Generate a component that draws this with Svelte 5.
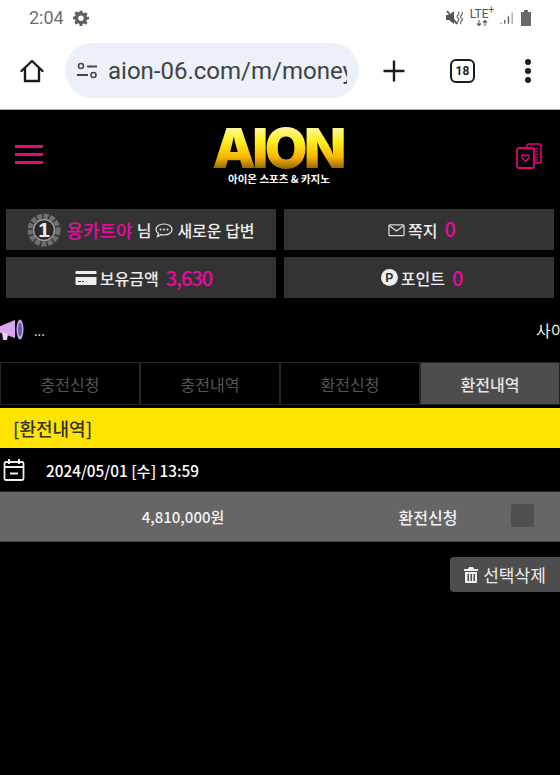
<script>
  const tabs = [
    { label: '충전신청', active: false },
    { label: '충전내역', active: false },
    { label: '환전신청', active: false },
    { label: '환전내역', active: true },
  ]
</script>

<div class="page">
  <div class="status-bar">
    <div class="status-left">
      <span class="clock">2:04</span>
      <svg class="gear" viewBox="0 0 24 24" width="16" height="16">
        <path fill="#5f5f5f" fill-rule="evenodd" d="M10 1h4l.6 3.2 1.9.8 2.7-1.8 2.8 2.8-1.8 2.7.8 1.9L24 10v4l-3.2.6-.8 1.9 1.8 2.7-2.8 2.8-2.7-1.8-1.9.8L14 24h-4l-.6-3.2-1.9-.8-2.7 1.8-2.8-2.8 1.8-2.7-.8-1.9L0 14v-4l3.2-.6.8-1.9L2.2 4.8 5 2l2.7 1.8 1.9-.8zM12 8.200a4.100 4.100 0 1 0 0 8.200 4.100 4.100 0 0 0 0-8.200z"/>
      </svg>
    </div>
    <div class="status-right">
      <svg viewBox="0 0 18 16" width="18" height="16">
        <path fill="#555" d="M0 5h3l5-4v13l-5-4H0z" />
        <path d="M1 1l10 13" stroke="#555" stroke-width="1.800" />
        <path d="M12 2q2 1 0 3t0 3 0 3 0 3M15.500 2q2 1 0 3t0 3 0 3 0 3" fill="none" stroke="#666" stroke-width="1.100" />
      </svg>
      <div class="lte">
        <span class="lte-text">LTE<sup>+</sup></span>
        <svg viewBox="0 0 12 6" width="12" height="6">
          <path d="M3 0v5M1 3.500L3 5.500l2-2M9 6V1M7 2.500L9 .5l2 2" fill="none" stroke="#555" stroke-width="1.100" />
        </svg>
      </div>
      <svg viewBox="0 0 16 14" width="15" height="14">
        <path d="M1 13v-1M5 13V9M9 13V5" stroke="#666" stroke-width="1.500" />
        <path d="M13 13V1" stroke="#aaa" stroke-width="1.500" />
      </svg>
      <svg viewBox="0 0 12 16" width="12" height="16">
        <path fill="#6a6a6a" d="M4 0h4v2h3v14H1V2h3z" />
      </svg>
    </div>
  </div>

  <div class="toolbar">
    <svg class="home" viewBox="0 0 26 26" width="26" height="26">
      <path d="M2.500 13L13 3l10.500 10M6 10.500V23h14V10.500" fill="none" stroke="#1c1c1c" stroke-width="2.400" stroke-linejoin="round" stroke-linecap="round" />
    </svg>
    <div class="url-pill">
      <svg viewBox="0 0 22 18" width="22" height="18">
        <circle cx="5" cy="4" r="2.500" fill="none" stroke="#44474d" stroke-width="1.600" />
        <path d="M11 4.500h10M1 13h11" stroke="#44474d" stroke-width="1.800" />
        <circle cx="17.500" cy="13" r="2.500" fill="none" stroke="#44474d" stroke-width="1.600" />
      </svg>
      <span class="url">aion-06.com/m/money</span>
    </div>
    <svg class="plus" viewBox="0 0 24 24" width="24" height="24">
      <path d="M12 1.500v21M1.500 12h21" stroke="#1c1c1c" stroke-width="2.400" />
    </svg>
    <div class="tab-count">18</div>
    <div class="dots"><i></i><i></i><i></i></div>
  </div>

  <header class="site-header">
    <div class="burger"><i></i><i></i><i></i></div>
    <div class="logo">
      <div class="logo-word">AION</div>
      <div class="logo-sub">아이온 스포츠 &amp; 카지노</div>
    </div>
    <svg class="cards" viewBox="0 0 28 28" width="28" height="28">
      <path d="M12 5V3.500q0-1.500 1.500-1.500h11q1.500 0 1.500 1.500v16q0 1.500-1.500 1.500H20" fill="none" stroke="#e6007e" stroke-width="1.600" />
      <path d="M19 6.500h4M19 9.500h4M19 12.500h4M19 15.500h4M19 18h4" stroke="#e6007e" stroke-width="1.500" stroke-dasharray="1.500 0.800" />
      <rect x="2" y="6" width="17" height="20" rx="2" fill="#000" stroke="#e6007e" stroke-width="1.800" />
      <path d="M10.500 19.500l-3.500-3.700q-1-2.800 1.600-2.800 1.300 0 1.900 1 .6-1 1.900-1 2.600 0 1.600 2.800z" fill="none" stroke="#e6007e" stroke-width="1.400" />
    </svg>
  </header>

  <div class="info-grid">
    <div class="info-box">
      <svg class="level" viewBox="0 0 34 34" width="34" height="34">
        <circle cx="17" cy="17" r="14" fill="none" stroke="#6e6e6e" stroke-width="5" stroke-dasharray="5 1.500" />
        <circle cx="17" cy="17" r="10.500" fill="#2a2a2a" stroke="#9a9a9a" stroke-width="1.500" />
        <text x="17" y="24" text-anchor="middle" class="level-num">1</text>
      </svg>
      <span class="pink name">용카트야</span>
      <span>님</span>
      <svg viewBox="0 0 18 16" width="18" height="16">
        <path d="M9 2c4.500 0 8 2.300 8 5.500S13.500 13 9 13q-1.500 0-3-.4L2.500 14.500l1-3C2 10.500 1 9 1 7.500 1 4.300 4.500 2 9 2z" fill="none" stroke="#eee" stroke-width="1.200" />
        <circle cx="5.500" cy="7.500" r="1" fill="#eee" /><circle cx="9" cy="7.500" r="1" fill="#eee" /><circle cx="12.500" cy="7.500" r="1" fill="#eee" />
      </svg>
      <span>새로운 답변</span>
    </div>
    <div class="info-box shift">
      <svg viewBox="0 0 18 14" width="17" height="14">
        <rect x="1" y="1.500" width="16" height="11.500" rx="1" fill="none" stroke="#ddd" stroke-width="1.300" />
        <path d="M1.500 2.500L9 8l7.500-5.500" fill="none" stroke="#ddd" stroke-width="1.300" />
      </svg>
      <span>쪽지</span>
      <span class="pink count up">0</span>
    </div>
    <div class="info-box shift">
      <svg viewBox="0 0 22 16" width="22" height="16">
        <path fill="#eee" d="M1.500 1h19q1 0 1 1v2H.5V2q0-1 1-1zM.5 7h21v7q0 1-1 1h-19q-1 0-1-1zM3 11v1h3v-1zm4 0v1h2v-1z" />
      </svg>
      <span>보유금액</span>
      <span class="pink count">3,630</span>
    </div>
    <div class="info-box shift">
      <span class="point-badge">P</span>
      <span>포인트</span>
      <span class="pink count">0</span>
    </div>
  </div>

  <div class="notice">
    <svg class="horn" viewBox="0 0 24 24" width="24" height="24">
      <path fill="#d9a6ea" d="M-2 9l17-7v18L-2 14z" />
      <ellipse cx="20" cy="11.500" rx="3.500" ry="10" fill="#c6a5e6" />
      <ellipse cx="20" cy="11.500" rx="2" ry="7" fill="#6d55b5" />
      <path fill="#e8d5f0" d="M2 14l6 2-1 6H3z" />
    </svg>
    <span class="ellipsis">...</span>
    <span class="marquee">사이트</span>
  </div>

  <nav class="tabs">
    {#each tabs as tab}
      <div class="tab" class:active={tab.active}>{tab.label}</div>
    {/each}
  </nav>

  <div class="section-title">[환전내역]</div>

  <div class="date-row">
    <svg viewBox="0 0 22 24" width="22" height="24">
      <rect x="1.500" y="4" width="19" height="18" rx="1.500" fill="none" stroke="#eee" stroke-width="1.800" />
      <path d="M1.500 9h19M6 1v5M16 1v5M7 15.500h8" stroke="#eee" stroke-width="2" />
    </svg>
    <span>2024/05/01 [수] 13:59</span>
  </div>

  <div class="record">
    <span class="amount">4,810,000원</span>
    <span class="kind">환전신청</span>
    <span class="check"></span>
  </div>

  <div class="actions">
    <button class="delete">
      <svg viewBox="0 0 14 16" width="14" height="16">
        <path fill="#eee" fill-rule="evenodd" d="M5 0h4l1 2h4v2H0V2h4zM1 5h12v10q0 1-1 1H2q-1 0-1-1zm2.500 2v7h1.500V7zm3 0v7H8V7zm3 0v7H11V7z" />
      </svg>
      선택삭제
    </button>
  </div>
</div>

<style>
  :global(body) {
    margin: 0;
    background: #000;
  }

  .page {
    width: 560px;
    height: 775px;
    overflow: hidden;
    background: #000;
    color: #eee;
    font-family: 'Noto Sans CJK KR', 'Noto Sans', sans-serif;
  }

  .status-bar {
    height: 35px;
    background: #fff;
    display: flex;
    justify-content: space-between;
    align-items: center;
    padding: 0 29px;
  }

  .status-left,
  .status-right {
    display: flex;
    align-items: center;
  }

  .status-left {
    gap: 9px;
  }

  .status-right {
    gap: 5px;
    margin-right: -1px;
  }

  .clock {
    font-family: Roboto, sans-serif;
    font-size: 18px;
    color: #6d6d6d;
  }

  .lte {
    display: flex;
    flex-direction: column;
    align-items: center;
    width: 26px;
    color: #555;
    font-family: Roboto, sans-serif;
    line-height: 0;
  }

  .lte-text {
    font-size: 12px;
    line-height: 11px;
  }

  .lte-text sup {
    font-size: 10px;
    line-height: 0;
  }

  .toolbar {
    height: 71px;
    padding-bottom: 3px;
    background: #fff;
    border-bottom: 1px solid #aaa;
    display: flex;
    align-items: center;
    padding-left: 19px;
  }

  .url-pill {
    width: 294px;
    height: 55px;
    margin-left: 20px;
    box-sizing: border-box;
    padding-left: 11px;
    background: #ecf0f9;
    border-radius: 28px;
    display: flex;
    align-items: center;
    gap: 10px;
    overflow: hidden;
  }

  .url {
    font-family: Roboto, sans-serif;
    font-size: 24px;
    color: #3f4246;
    width: 239px;
    overflow: hidden;
    white-space: nowrap;
  }

  .plus {
    margin-left: 23px;
  }

  .tab-count {
    width: 25px;
    height: 24px;
    margin-left: 44px;
    box-sizing: border-box;
    border: 2.500px solid #1c1c1c;
    border-radius: 6px;
    color: #1c1c1c;
    font-family: Roboto, sans-serif;
    font-size: 12px;
    font-weight: 700;
    display: flex;
    align-items: center;
    justify-content: center;
  }

  .dots {
    margin-left: 50px;
    display: flex;
    flex-direction: column;
    gap: 3px;
  }

  .dots i {
    width: 6px;
    height: 6px;
    background: #1c1c1c;
    border-radius: 50%;
  }

  .site-header {
    height: 99px;
    display: flex;
    align-items: center;
    justify-content: space-between;
    padding: 0 17px 10px 15px;
    box-sizing: border-box;
  }

  .burger {
    display: flex;
    flex-direction: column;
    gap: 5px;
  }

  .burger i {
    display: block;
    width: 28px;
    height: 3px;
    background: #e6097e;
  }

  .logo {
    display: flex;
    flex-direction: column;
    align-items: center;
    margin-top: 2px;
  }

  .logo-word {
    font-family: Inter, 'Liberation Sans', sans-serif;
    font-size: 55px;
    font-weight: 900;
    line-height: 44px;
    letter-spacing: -3.500px;
    padding-right: 3px;
    background: linear-gradient(#fff9a8 0%, #ffee20 35%, #f8b800 70%, #8a5a00 100%);
    -webkit-background-clip: text;
    background-clip: text;
    color: transparent;
  }

  .logo-sub {
    font-size: 10.500px;
    font-weight: 700;
    line-height: 14px;
    color: #fff;
    margin-top: 2px;
  }

  .cards {
    margin-top: 2px;
  }

  .info-grid {
    display: grid;
    grid-template-columns: 270px 270px;
    grid-auto-rows: 41px;
    column-gap: 8px;
    row-gap: 7px;
    padding: 0 6px;
  }

  .info-box {
    background: #333;
    display: flex;
    align-items: center;
    justify-content: center;
    gap: 4px;
    font-size: 16px;
    font-weight: 500;
    line-height: 20px;
    color: #eee;
    white-space: nowrap;
  }

  .shift {
    box-sizing: border-box;
    padding-left: 5px;
    gap: 3px;
  }

  .pink {
    color: #ea0aa0;
  }

  .name {
    font-size: 18px;
  }

  .level {
    margin-right: 1px;
  }

  .level-num {
    font-family: 'Liberation Sans', sans-serif;
    font-size: 21px;
    font-weight: 700;
    fill: #eee;
  }

  .count {
    font-size: 20px;
    letter-spacing: -1px;
    margin-left: 4px;
  }

  .up {
    margin-bottom: 2px;
  }

  .point-badge {
    width: 17px;
    height: 17px;
    border-radius: 50%;
    background: #eee;
    color: #333;
    font-family: 'Liberation Sans', sans-serif;
    font-size: 12px;
    font-weight: 700;
    display: flex;
    align-items: center;
    justify-content: center;
  }

  .notice {
    height: 64px;
    display: flex;
    align-items: center;
    position: relative;
    font-size: 16px;
  }

  .ellipsis {
    margin-left: 10px;
    font-size: 13px;
  }

  .marquee {
    position: absolute;
    left: 536px;
    white-space: nowrap;
    font-size: 16px;
  }

  .tabs {
    display: grid;
    grid-template-columns: repeat(4, 140px);
    height: 43px;
  }

  .tab {
    box-sizing: border-box;
    border: 1px solid #262626;
    color: #555;
    font-size: 16px;
    display: flex;
    align-items: center;
    justify-content: center;
  }

  .tab.active {
    background: #4d4d4d;
    color: #e6e6e6;
    font-weight: 500;
  }

  .section-title {
    height: 40px;
    margin-top: 3px;
    box-sizing: border-box;
    padding-left: 13px;
    background: #ffe400;
    color: #333;
    font-size: 18px;
    font-weight: 500;
    display: flex;
    align-items: center;
  }

  .date-row {
    height: 44px;
    display: flex;
    align-items: center;
    gap: 21px;
    padding-left: 3px;
    color: #fff;
    font-size: 15.300px;
    font-weight: 500;
    border-bottom: 1px solid #222;
    box-sizing: border-box;
  }

  .record {
    height: 50px;
    background: #666;
    border-bottom: 1px solid #444;
    box-sizing: border-box;
    display: grid;
    grid-template-columns: 366px 124px 1fr;
    align-items: center;
    font-size: 16px;
    font-weight: 500;
    color: #f2f2f2;
  }

  .amount {
    font-size: 15px;
    text-align: center;
  }

  .kind {
    text-align: center;
  }

  .check {
    width: 23px;
    height: 23px;
    margin: 0 0 3px 21px;
    background: #4f4f4f;
    border-radius: 2px;
  }

  .actions {
    display: flex;
    justify-content: flex-end;
    padding-top: 15px;
  }

  .delete {
    width: 110px;
    height: 35px;
    border: 0;
    border-radius: 4px 0 0 4px;
    background: #4d4d4d;
    color: #eee;
    font-family: inherit;
    font-size: 17px;
    display: flex;
    align-items: center;
    justify-content: center;
    gap: 5px;
    padding: 0;
  }
</style>
